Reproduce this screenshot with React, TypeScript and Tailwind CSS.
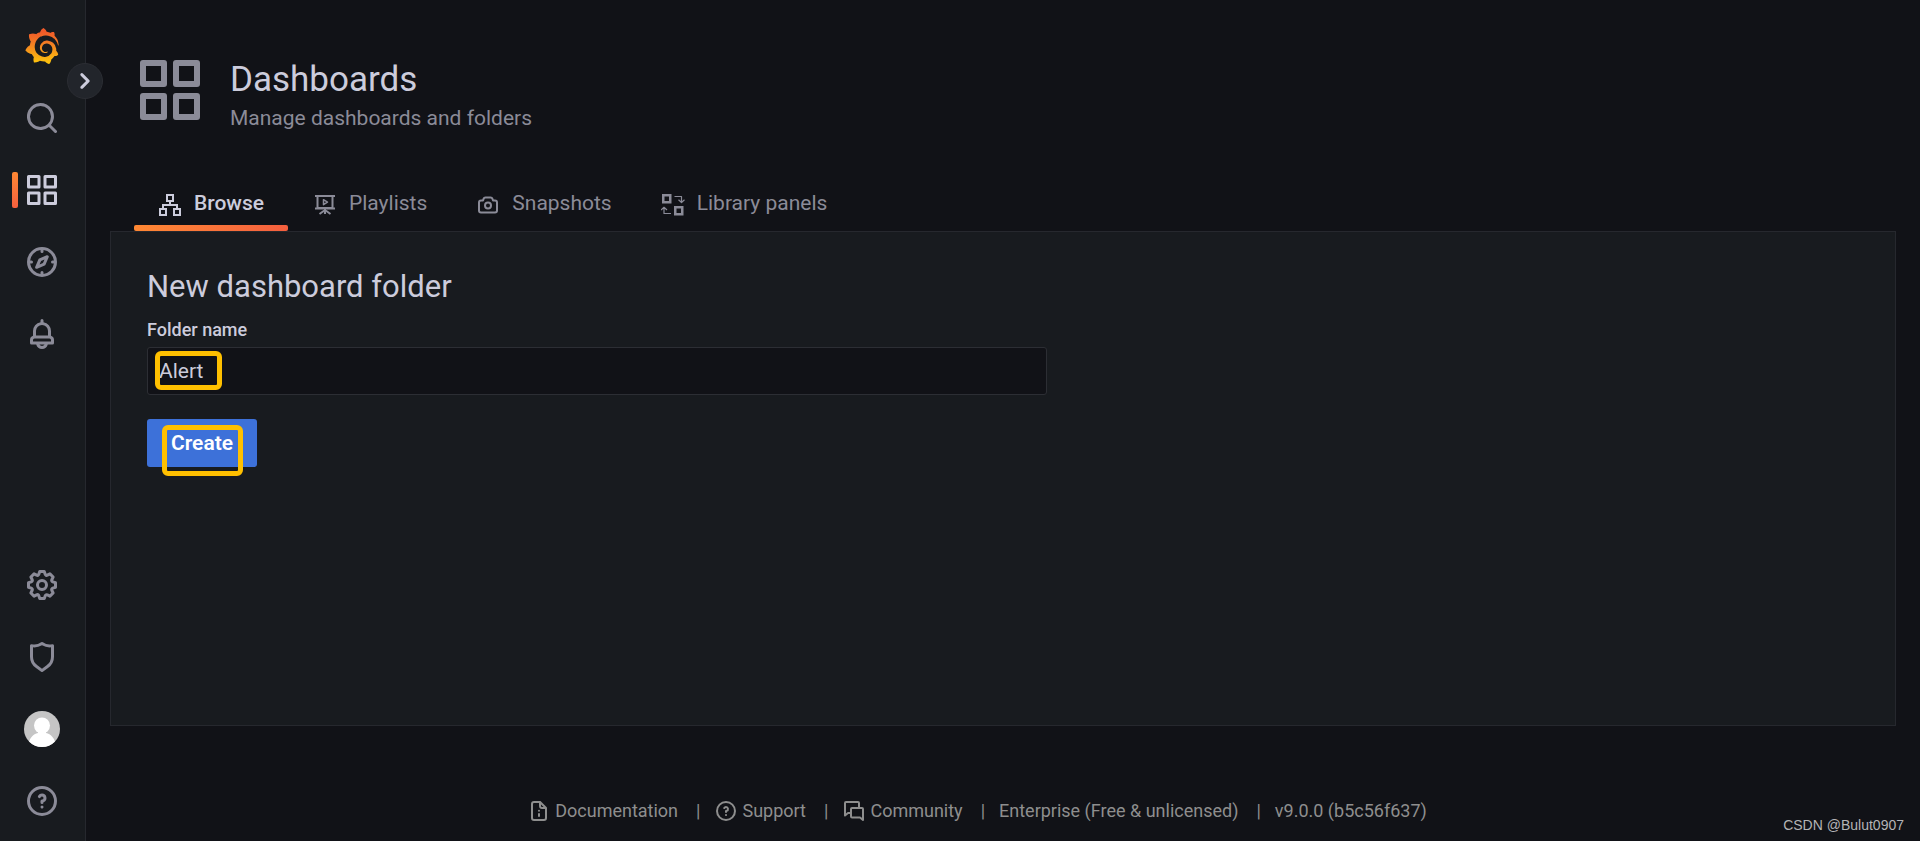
import type { ReactNode } from "react";
import { SiGrafana } from "react-icons/si";

const paths = {
  apps: "M10,13H3a1,1,0,0,0-1,1v7a1,1,0,0,0,1,1h7a1,1,0,0,0,1-1V14A1,1,0,0,0,10,13ZM9,20H4V15H9ZM21,2H14a1,1,0,0,0-1,1v7a1,1,0,0,0,1,1h7a1,1,0,0,0,1-1V3A1,1,0,0,0,21,2ZM20,9H15V4h5Zm1,4H14a1,1,0,0,0-1,1v7a1,1,0,0,0,1,1h7a1,1,0,0,0,1-1V14A1,1,0,0,0,21,13Zm-1,7H15V15h5ZM10,2H3A1,1,0,0,0,2,3v7a1,1,0,0,0,1,1h7a1,1,0,0,0,1-1V3A1,1,0,0,0,10,2ZM9,9H4V4H9Z",
  search: "M21.71,20.29,18,16.61A9,9,0,1,0,16.61,18l3.68,3.68a1,1,0,0,0,1.42,0A1,1,0,0,0,21.71,20.29ZM11,18a7,7,0,1,1,7-7A7,7,0,0,1,11,18Z",
  question: "M11.29,15.29a1.58,1.58,0,0,0-.12.15.76.76,0,0,0-.09.18.64.64,0,0,0-.06.18,1.36,1.36,0,0,0,0,.2.84.84,0,0,0,.08.38.9.9,0,0,0,.54.54.94.94,0,0,0,.76,0,.9.9,0,0,0,.54-.54A1,1,0,0,0,13,16a1,1,0,0,0-.29-.71A1,1,0,0,0,11.29,15.29ZM12,2A10,10,0,1,0,22,12,10,10,0,0,0,12,2Zm0,18a8,8,0,1,1,8-8A8,8,0,0,1,12,20ZM12,7A3,3,0,0,0,9.4,8.5a1,1,0,1,0,1.73,1A1,1,0,0,1,12,9a1,1,0,0,1,0,2,1,1,0,0,0-1,1v1a1,1,0,0,0,2,0v-.18A3,3,0,0,0,12,7Z",
  bell: "M18,13.18V10a6,6,0,0,0-5-5.91V3a1,1,0,0,0-2,0V4.09A6,6,0,0,0,6,10v3.18A3,3,0,0,0,4,16v2a1,1,0,0,0,1,1H8.14a4,4,0,0,0,7.72,0H19a1,1,0,0,0,1-1V16A3,3,0,0,0,18,13.18ZM8,10a4,4,0,0,1,8,0v3H8Zm4,10a2,2,0,0,1-1.72-1h3.44A2,2,0,0,1,12,20Zm6-3H6V16a1,1,0,0,1,1-1H17a1,1,0,0,1,1,1Z",
  compass: "M12,2A10,10,0,1,0,22,12,10,10,0,0,0,12,2Zm1,17.93V19a1,1,0,0,0-2,0v.93A8,8,0,0,1,4.07,13H5a1,1,0,0,0,0-2H4.07A8,8,0,0,1,11,4.07V5a1,1,0,0,0,2,0V4.07A8,8,0,0,1,19.93,11H19a1,1,0,0,0,0,2h.93A8,8,0,0,1,13,19.93ZM15.14,7.55l-5,2.12a1,1,0,0,0-.52.52l-2.12,5a1,1,0,0,0,.21,1.1,1,1,0,0,0,.7.29.93.93,0,0,0,.4-.08l5-2.12a1,1,0,0,0,.52-.52l2.12-5a1,1,0,0,0-1.31-1.31Zm-2.49,5.1-2.28,1,1-2.28,2.28-1Z",
  cog: "M21.32,9.55l-1.89-.63.89-1.78A1,1,0,0,0,20.13,6L18,3.87a1,1,0,0,0-1.15-.19l-1.78.89-.63-1.89A1,1,0,0,0,13.5,2h-3a1,1,0,0,0-.95.68L8.92,4.57,7.14,3.68A1,1,0,0,0,6,3.87L3.87,6a1,1,0,0,0-.19,1.15l.89,1.78-1.89.63A1,1,0,0,0,2,10.5v3a1,1,0,0,0,.68.95l1.89.63-.89,1.78A1,1,0,0,0,3.87,18L6,20.13a1,1,0,0,0,1.15.19l1.78-.89.63,1.89a1,1,0,0,0,.95.68h3a1,1,0,0,0,.95-.68l.63-1.89,1.78.89A1,1,0,0,0,18,20.13L20.13,18a1,1,0,0,0,.19-1.15l-.89-1.78,1.89-.63A1,1,0,0,0,22,13.5v-3A1,1,0,0,0,21.32,9.55ZM20,12.78l-1.2.4A2,2,0,0,0,17.64,16l.57,1.14-1.1,1.1L16,17.64a2,2,0,0,0-2.79,1.16l-.4,1.2H11.22l-.4-1.2A2,2,0,0,0,8,17.64l-1.14.57-1.1-1.1L6.36,16A2,2,0,0,0,5.2,13.18L4,12.78V11.22l1.2-.4A2,2,0,0,0,6.36,8L5.79,6.89l1.1-1.1L8,6.36A2,2,0,0,0,10.82,5.2l.4-1.2h1.56l.4,1.2A2,2,0,0,0,16,6.36l1.14-.57,1.1,1.1L17.64,8a2,2,0,0,0,1.16,2.79l1.2.4ZM12,8a4,4,0,1,0,4,4A4,4,0,0,0,12,8Zm0,6a2,2,0,1,1,2-2A2,2,0,0,1,12,14Z",
  shield: "M19.63,3.65a1,1,0,0,0-.84-.2,8,8,0,0,1-6.22-1.27,1,1,0,0,0-1.14,0A8,8,0,0,1,5.21,3.45a1,1,0,0,0-.84.2A1,1,0,0,0,4,4.43v7.45a9,9,0,0,0,3.77,7.33l3.65,2.6a1,1,0,0,0,1.16,0l3.65-2.6A9,9,0,0,0,20,11.88V4.43A1,1,0,0,0,19.63,3.65ZM18,11.88a7,7,0,0,1-2.93,5.7L12,19.77,8.93,17.58A7,7,0,0,1,6,11.88V5.58a10,10,0,0,0,6-1.39,10,10,0,0,0,6,1.39Z",
  camera: "M19,6.5H17.72l-.32-1a3,3,0,0,0-2.84-2H9.44A3,3,0,0,0,6.6,5.55l-.32,1H5a3,3,0,0,0-3,3v8a3,3,0,0,0,3,3H19a3,3,0,0,0,3-3v-8A3,3,0,0,0,19,6.5Zm1,11a1,1,0,0,1-1,1H5a1,1,0,0,1-1-1v-8a1,1,0,0,1,1-1H7a1,1,0,0,0,1-.68l.54-1.64a1,1,0,0,1,.95-.68h5.12a1,1,0,0,1,.95.68l.54,1.64A1,1,0,0,0,17,8.5h2a1,1,0,0,1,1,1Zm-8-9a4,4,0,1,0,4,4A4,4,0,0,0,12,8.5Zm0,6a2,2,0,1,1,2-2A2,2,0,0,1,12,14.5Z",
  document: "M20,8.94a1.31,1.31,0,0,0-.06-.27l0-.09a1.07,1.07,0,0,0-.19-.28h0l-6-6h0a1.07,1.07,0,0,0-.28-.19l-.1,0A1.1,1.1,0,0,0,13.06,2H7A3,3,0,0,0,4,5V19a3,3,0,0,0,3,3H17a3,3,0,0,0,3-3V9S20,9,20,8.94ZM14,5.41,16.59,8H15a1,1,0,0,1-1-1ZM18,19a1,1,0,0,1-1,1H7a1,1,0,0,1-1-1V5A1,1,0,0,1,7,4h5V7a3,3,0,0,0,3,3h3ZM12,14a1,1,0,0,0-1,1v2a1,1,0,0,0,2,0V15A1,1,0,0,0,12,14Zm0-3.200a1,1,0,1,0,1,1A1,1,0,0,0,12,10.800Z",
  angle: "M14.83,11.29,10.59,7.05a1,1,0,0,0-1.42,0,1,1,0,0,0,0,1.41L12.71,12,9.17,15.54a1,1,0,0,0,0,1.41,1,1,0,0,0,.71.29,1,1,0,0,0,.71-.29l4.24-4.24A1,1,0,0,0,14.83,11.29Z",
};

function Icon({ name, className }: { name: keyof typeof paths; className: string }) {
  return (
    <svg viewBox="0 0 24 24" fill="currentColor" aria-hidden="true" className={className}>
      <path d={paths[name]} />
    </svg>
  );
}

function LineIcon({ children }: { children: ReactNode }) {
  return (
    <svg viewBox="0 0 24 24" fill="none" stroke="currentColor" strokeWidth="2" strokeLinejoin="round" aria-hidden="true" className="size-6 shrink-0">
      {children}
    </svg>
  );
}

function Avatar() {
  return (
    <svg viewBox="0 0 36 36" aria-hidden="true" className="size-9">
      <clipPath id="avatar-clip">
        <circle cx="18" cy="18" r="18" />
      </clipPath>
      <g clipPath="url(#avatar-clip)">
        <rect width="36" height="36" fill="#c5c5c5" />
        <circle cx="18" cy="14.5" r="8" fill="#fff" />
        <path d="M14 20h8v2c5 1 8 5 9 9v5H5v-5c1-4 4-8 9-9Z" fill="#fff" />
      </g>
    </svg>
  );
}

function NavLink({ label, active, children }: { label: string; active?: boolean; children: ReactNode }) {
  return (
    <a
      href="#"
      aria-label={label}
      className={`relative flex h-[72px] items-center justify-center ${active ? "text-[#ccccdc]" : "text-[#8b8b98]"}`}
    >
      {active && <span className="absolute left-3 h-9 w-1.5 rounded-xs bg-linear-to-b from-[#ff8833] to-[#f55f3e]" />}
      {children}
    </a>
  );
}

function Sidebar() {
  return (
    <nav className="relative flex w-[86px] shrink-0 flex-col border-r border-[#26282e] bg-[#181b1f] pt-[10px] pb-1">
      <div className="flex grow flex-col pr-0.5">
        <NavLink label="Home">
          <svg width="0" height="0" className="absolute" aria-hidden="true">
            <linearGradient id="brand" x1="0" y1="0" x2="0" y2="1">
              <stop offset="0.1" stopColor="#f15a29" />
              <stop offset="0.4" stopColor="#f37a24" />
              <stop offset="1" stopColor="#fdc70b" />
            </linearGradient>
          </svg>
          <SiGrafana className="size-9 fill-[url(#brand)]" />
        </NavLink>
        <NavLink label="Search"><Icon name="search" className="size-9" /></NavLink>
        <NavLink label="Dashboards" active><Icon name="apps" className="size-9" /></NavLink>
        <NavLink label="Explore"><Icon name="compass" className="size-9" /></NavLink>
        <NavLink label="Alerting"><Icon name="bell" className="size-9" /></NavLink>
        <div className="grow" />
        <NavLink label="Configuration"><Icon name="cog" className="size-9" /></NavLink>
        <NavLink label="Server Admin"><Icon name="shield" className="size-9" /></NavLink>
        <NavLink label="Profile"><Avatar /></NavLink>
        <NavLink label="Help"><Icon name="question" className="size-9" /></NavLink>
      </div>
      <button
        type="button"
        aria-label="Expand menu"
        className="absolute top-[63px] -right-[18px] z-10 flex size-9 items-center justify-center rounded-full border border-[#2b2d33] bg-[#22252b] text-[#ccccdc]"
      >
        <Icon name="angle" className="size-9 shrink-0" />
      </button>
    </nav>
  );
}

function Tab({ label, active, icon }: { label: string; active?: boolean; icon: ReactNode }) {
  return (
    <a
      href="#"
      aria-current={active ? "page" : undefined}
      className={`relative flex items-center gap-3 px-6 pt-4 pb-3 text-[21px] leading-8 ${active ? "font-medium text-[#ccccdc]" : "text-[#8b8b98]"}`}
    >
      <span className="pt-1">{icon}</span>
      {label}
      {active && <span className="absolute inset-x-0 bottom-0 h-1.5 rounded-xs bg-linear-to-r from-[#ff8833] to-[#f55f3e]" />}
    </a>
  );
}

function Tabs() {
  return (
    <nav className="flex gap-px px-6">
      <Tab
        label="Browse"
        active
        icon={
          <LineIcon>
            <path strokeLinejoin="miter" d="M9 2h6v6H9zM2 16h6v6H2zM16 16h6v6h-6zM12 8v4M5 16v-4h14v4" />
          </LineIcon>
        }
      />
      <Tab
        label="Playlists"
        icon={
          <LineIcon>
            <path d="M2 3h20M4.500 3v12h15V3M2 15.500h20M12 15v6M12 17l-5.500 4M12 17l5.500 4" />
            <path strokeWidth="1.500" d="M10.500 6.700v5l4-2.500z" />
          </LineIcon>
        }
      />
      <Tab label="Snapshots" icon={<Icon name="camera" className="size-6" />} />
      <Tab
        label="Library panels"
        icon={
          <LineIcon>
            <path strokeLinejoin="miter" strokeWidth="2.500" d="M2.250 2.250h7v7h-7zM14.250 14.250h7v7h-7z" />
            <path strokeWidth="1.200" d="M13.500 3.500h7v5.500M17.500 6.800l3 2.700 3-2.700M10 20.500H3v-6M0 17l3-2.700L6 17" />
          </LineIcon>
        }
      />
    </nav>
  );
}

function FolderForm() {
  return (
    <form className="flex max-w-[900px] flex-col items-start">
      <h2 className="text-[31px] leading-[38px] text-[#ccccdc]">New dashboard folder</h2>
      <label htmlFor="folder-name" className="mt-3 text-lg leading-6 font-medium text-[#ccccdc]">
        Folder name
      </label>
      <div className="relative mt-[5px] w-full">
        <input
          id="folder-name"
          type="text"
          defaultValue="Alert"
          className="h-12 w-full rounded-[3px] border border-[#2c2e34] bg-[#111217] px-[11px] text-[21px] text-[#ccccdc] outline-none"
        />
        <span className="pointer-events-none absolute top-1 left-2 h-[39px] w-[67px] rounded-md border-5 border-[#ffc000]" />
      </div>
      <div className="relative mt-6">
        <button
          type="button"
          className="block h-12 w-[110px] rounded-[3px] bg-[#3d71d9] text-[21px] leading-12 font-semibold text-white"
        >
          Create
        </button>
        <span className="pointer-events-none absolute top-1.5 left-[15px] h-[51px] w-[81px] rounded-md border-5 border-[#ffc000]" />
      </div>
    </form>
  );
}

function Footer() {
  const separator = <li aria-hidden="true" className="pr-3.5 pl-4.5">|</li>;
  return (
    <footer className="flex justify-center pr-13 text-lg leading-7 text-[#8e8e8e]">
      <ul className="flex items-center">
        <li>
          <a href="#" className="flex items-center gap-1">
            <Icon name="document" className="size-6" />
            Documentation
          </a>
        </li>
        {separator}
        <li>
          <a href="#" className="flex items-center gap-1">
            <Icon name="question" className="size-6" />
            Support
          </a>
        </li>
        {separator}
        <li>
          <a href="#" className="flex items-center gap-1">
            <LineIcon>
              <path d="M9 14H6l-3 2.500V4a1 1 0 0 1 1-1h12a1 1 0 0 1 1 1v4M10 9h10a1 1 0 0 1 1 1v11l-3-2.500h-8a1 1 0 0 1-1-1V10a1 1 0 0 1 1-1z" />
            </LineIcon>
            Community
          </a>
        </li>
        {separator}
        <li><a href="#">Enterprise (Free &amp; unlicensed)</a></li>
        {separator}
        <li>v9.0.0 (b5c56f637)</li>
      </ul>
    </footer>
  );
}

export default function App() {
  return (
    <div className="relative flex min-h-screen bg-[#111217] font-[Roboto,sans-serif]">
      <Sidebar />
      <main className="flex grow flex-col px-6">
        <header className="flex items-start gap-6 px-6 pt-[54px]">
          <Icon name="apps" className="size-[72px] text-[#8b8b98]" />
          <div>
            <h1 className="text-[35px] leading-[52px] text-[#ccccdc]">Dashboards</h1>
            <p className="text-[21px] leading-6 text-[#8b8b98]">Manage dashboards and folders</p>
          </div>
        </header>
        <div className="pt-[41px]">
          <Tabs />
        </div>
        <section className="grow border border-[#26282e] bg-[#181b1f] p-9">
          <FolderForm />
        </section>
        <div className="pt-[71px] pb-4">
          <Footer />
        </div>
      </main>
      <span className="absolute right-4 bottom-1.5 font-['Liberation_Sans',sans-serif] text-sm leading-5 text-[#b4b4b6]">
        CSDN @Bulut0907
      </span>
    </div>
  );
}
